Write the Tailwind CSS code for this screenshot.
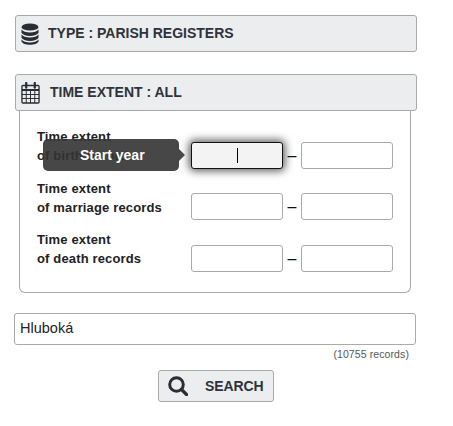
<!DOCTYPE html>
<html lang="en">
<head>
  <meta charset="UTF-8" />
  <title>Search</title>
  <script src="https://cdn.jsdelivr.net/npm/@tailwindcss/browser@4"></script>
</head>
<body class="bg-white text-[#222] font-['Liberation_Sans',Arial,sans-serif]">
  <div class="w-[453px] h-[426px] overflow-hidden pt-[15px] pl-[14px]">

    <!-- Type -->
    <div class="ml-px w-[402px] h-[37px] flex items-center bg-[#ecedef] border border-[#aaa] rounded-[3px] pl-[5px]">
      <svg class="w-[18px] h-[22px] shrink-0 text-[#2a2d33]" viewBox="0 0 19 22" fill="currentColor" preserveAspectRatio="none">
        <ellipse cx="9.5" cy="4" rx="9" ry="3.6" />
        <path d="M.5 6.600C2 8.600 5.500 9.600 9.500 9.600s7.500-1 9-3v3.100c-1 2-4.500 3.200-9 3.200s-8-1.200-9-3.200z" />
        <path d="M.5 11.600c1.500 2 5 3 9 3s7.500-1 9-3v3.100c-1 2-4.500 3.200-9 3.200s-8-1.200-9-3.200z" />
        <path d="M.5 16.400c1.500 2 5 3 9 3s7.500-1 9-3v2.100c-1 2-4.500 3.300-9 3.300s-8-1.300-9-3.300z" />
      </svg>
      <span class="ml-[9px] text-[14px] font-bold text-[#2f333a]">TYPE : PARISH REGISTERS</span>
    </div>

    <!-- Time extent -->
    <div class="ml-px mt-[22px] w-[402px] h-[37px] flex items-center bg-[#ecedef] border border-[#aaa] rounded-[3px] pl-[5px]">
      <svg class="w-[19px] h-[22px] shrink-0 text-[#2a2d33]" viewBox="0 0 20 22" fill="none" stroke="currentColor" preserveAspectRatio="none">
        <rect x="1" y="3.500" width="18" height="17.500" rx="1" stroke-width="1.400" />
        <path d="M1 8h18" stroke-width="2" />
        <path d="M1 12.500h18M1 16.500h18M5.500 8v13M10 8v13M14.500 8v13" stroke-width="1" />
        <path d="M5.500 1v4.500M14.500 1v4.500" stroke-width="2.400" stroke-linecap="round" />
      </svg>
      <span class="ml-[10px] text-[14px] font-bold text-[#2f333a]">TIME EXTENT : ALL</span>
    </div>

    <div class="relative ml-[5px] w-[392px] h-[182px] border border-t-0 border-[#aaa] rounded-b-[6px] pt-[31px] pl-[17px] flex flex-col">
      <div class="flex items-start h-[27px]">
        <div class="w-[154px] -mt-[15px] text-[13px] leading-[19px] font-bold tracking-[0.15px]">Time extent<br />of birth records</div>
        <div class="w-[92px] h-[27px] bg-[#f3f3f3] border border-[#111] rounded-[3px] shadow-[0_0_8px_2px_rgba(0,0,0,0.65)] flex items-center pl-[45px]">
          <div class="w-px h-[15px] bg-black"></div>
        </div>
        <span class="w-[18px] self-center text-center text-[16px] text-[#111]">–</span>
        <div class="w-[92px] h-[27px] bg-white border border-[#aaa] rounded-[3px]"></div>
      </div>
      <div class="mt-[24px] flex items-start h-[27px]">
        <div class="w-[154px] -mt-[14px] text-[13px] leading-[19px] font-bold tracking-[0.15px]">Time extent<br />of marriage records</div>
        <div class="w-[92px] h-[27px] bg-white border border-[#aaa] rounded-[3px]"></div>
        <span class="w-[18px] self-center text-center text-[16px] text-[#111]">–</span>
        <div class="w-[92px] h-[27px] bg-white border border-[#aaa] rounded-[3px]"></div>
      </div>
      <div class="mt-[25px] flex items-start h-[27px]">
        <div class="w-[154px] -mt-[15px] text-[13px] leading-[19px] font-bold tracking-[0.15px]">Time extent<br />of death records</div>
        <div class="w-[92px] h-[27px] bg-white border border-[#aaa] rounded-[3px]"></div>
        <span class="w-[18px] self-center text-center text-[16px] text-[#111]">–</span>
        <div class="w-[92px] h-[27px] bg-white border border-[#aaa] rounded-[3px]"></div>
      </div>

      <!-- Tooltip -->
      <div class="absolute left-[23px] top-[28px] w-[136px] h-[32px] bg-[#333]/90 rounded-[5px] flex items-center pl-[37px] text-white text-[14px] font-bold">
        Start year
        <div class="absolute right-[-6px] top-[10px] w-0 h-0 border-y-[6px] border-y-transparent border-l-[6px] border-l-[#484848]"></div>
      </div>
    </div>

    <!-- Place -->
    <div class="mt-[20px] w-[402px] h-[32px] flex items-center border border-[#aaa] rounded-[3px] pl-[5px] text-[14.5px] text-[#222]">Hluboká</div>
    <div class="w-[395px] text-right text-[10.5px] leading-[12px] mt-[3px] text-[#555] tracking-[0.1px]">(10755 records)</div>

    <!-- Search -->
    <div class="ml-[144px] mt-[10px] w-[116px] h-[32px] flex items-center bg-[#ecedef] border border-[#aaa] rounded-[3px] pl-[9px]">
      <svg class="w-[20px] h-[20px] shrink-0 text-[#2a2d33]" viewBox="0 0 20 20" fill="none" stroke="currentColor" stroke-width="3">
        <circle cx="8.500" cy="8.500" r="6.800" />
        <path d="M13.500 13.500l5 5" stroke-width="3.200" stroke-linecap="round" />
      </svg>
      <span class="ml-[17px] text-[14px] font-bold tracking-[-0.1px] text-[#2f333a]">SEARCH</span>
    </div>
  </div>
</body>
</html>
